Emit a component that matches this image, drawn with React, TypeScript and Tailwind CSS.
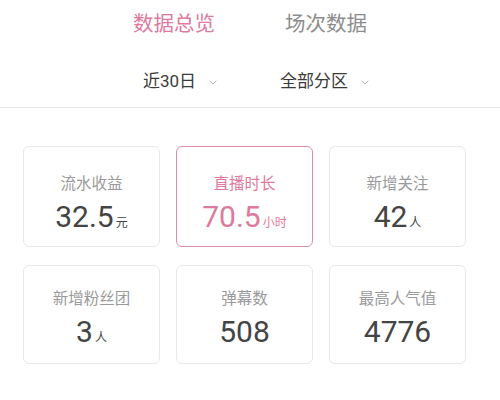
import type { ReactNode } from "react";

type Stat = {
    label: string;
    value: string;
    unit?: string;
    active?: boolean;
};

const rowOne: Stat[] = [
    { label: "流水收益", value: "32.5", unit: "元" },
    { label: "直播时长", value: "70.5", unit: "小时", active: true },
    { label: "新增关注", value: "42", unit: "人" },
];

const rowTwo: Stat[] = [
    { label: "新增粉丝团", value: "3", unit: "人" },
    { label: "弹幕数", value: "508" },
    { label: "最高人气值", value: "4776" },
];

const Chevron = () => (
    <svg width="8" height="5" viewBox="0 0 8 5" fill="none" className="mt-[2px]">
        <path d="M1 1l3 3 3-3" stroke="#b0b0b0" strokeWidth="1" strokeLinecap="round" strokeLinejoin="round" />
    </svg>
);

const Filter = ({ children }: { children: ReactNode }) => (
    <div className="flex items-center gap-[13px]">
        <span className="text-[17px] leading-[22px] text-[#3a3a3a]">{children}</span>
        <Chevron />
    </div>
);

const StatCard = ({ stat, top }: { stat: Stat; top: string }) => (
    <div
        className={`flex flex-col items-center rounded-[6px] border ${top} ${
            stat.active ? "border-[#e28ba9]" : "border-[#e8e8e8]"
        }`}
    >
        <p className={`text-[15.5px] leading-[22px] ${stat.active ? "text-[#dd7a9c]" : "text-[#9a9a9a]"}`}>
            {stat.label}
        </p>
        <p className={`mt-[4px] flex items-baseline leading-[36px] ${stat.active ? "text-[#dd7a9c]" : "text-[#444]"}`}>
            <span className="text-[30px]">{stat.value}</span>
            {stat.unit && <span className="ml-[2px] text-[12px]">{stat.unit}</span>}
        </p>
    </div>
);

export default function App() {
    return (
        <div
            className="w-[500px] h-[400px] bg-white overflow-hidden"
            style={{ fontFamily: 'Roboto, "Noto Sans CJK SC", sans-serif' }}
        >
            <div className="flex justify-center pt-[10px] h-[50px]">
                <div className="w-[152px] text-center text-[20.5px] leading-[28px] text-[#dd7a9e]">数据总览</div>
                <div className="w-[152px] text-center text-[20.5px] leading-[28px] text-[#8c8c8c]">场次数据</div>
            </div>

            <div className="flex items-center pl-[143px] gap-[63px] h-[58px] pt-[5px] border-b border-[#e6e6e6]">
                <Filter>近30日</Filter>
                <Filter>全部分区</Filter>
            </div>

            <div className="pl-[23px] pt-[38px]">
                <div className="grid grid-cols-[137px_137px_137px] gap-x-[16px] h-[101px]">
                    {rowOne.map((stat) => (
                        <StatCard key={stat.label} stat={stat} top="pt-[26px]" />
                    ))}
                </div>
                <div className="mt-[18px] grid grid-cols-[137px_137px_137px] gap-x-[16px] h-[99px]">
                    {rowTwo.map((stat) => (
                        <StatCard key={stat.label} stat={stat} top="pt-[22px]" />
                    ))}
                </div>
            </div>
        </div>
    );
}
